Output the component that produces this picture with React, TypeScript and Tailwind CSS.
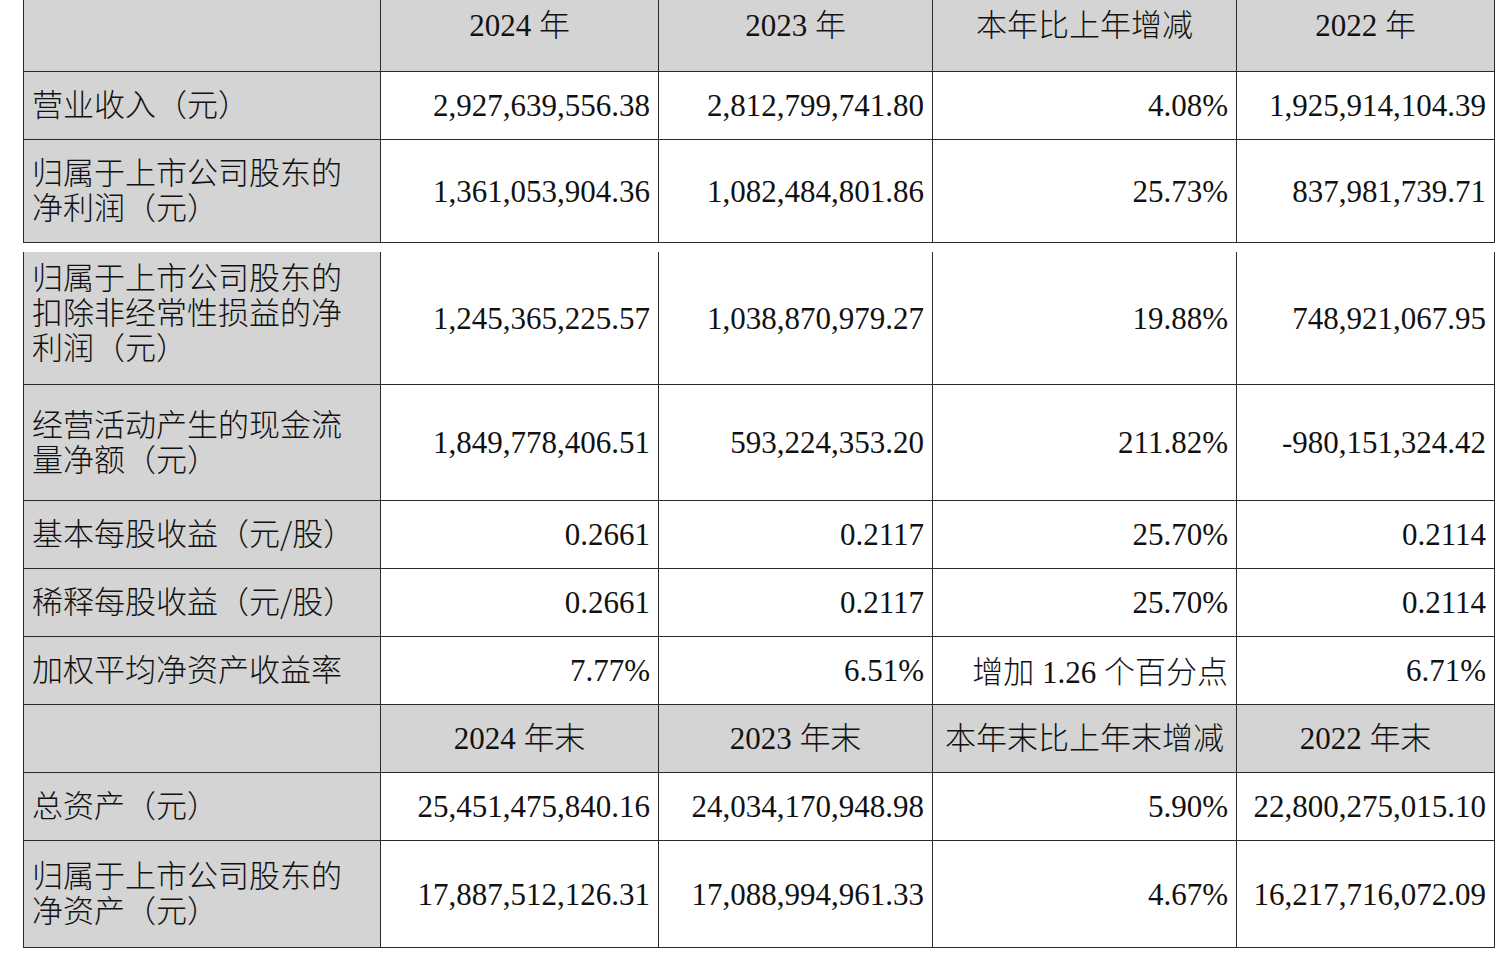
import React from "react";

const serif = '"Liberation Serif", serif';
const cjk = '"Noto Sans CJK SC", sans-serif';

type Row = {
  label: string[];
  values: string[];
  h: string;
  head?: boolean;
  labelPad?: string;
};

const cols = "grid grid-cols-[357px_278px_274px_304px_259px]";

const top: Row[] = [
  { label: [""], values: ["2024 年", "2023 年", "本年比上年增减", "2022 年"], h: "h-[72px]", head: true },
  { label: ["营业收入（元）"], values: ["2,927,639,556.38", "2,812,799,741.80", "4.08%", "1,925,914,104.39"], h: "h-[68px]" },
  {
    label: ["归属于上市公司股东的", "净利润（元）"],
    values: ["1,361,053,904.36", "1,082,484,801.86", "25.73%", "837,981,739.71"],
    h: "h-[103px]",
  },
];

const bottom: Row[] = [
  {
    label: ["归属于上市公司股东的", "扣除非经常性损益的净", "利润（元）"],
    values: ["1,245,365,225.57", "1,038,870,979.27", "19.88%", "748,921,067.95"],
    h: "h-[133px]",
    labelPad: "pb-[15px]",
  },
  {
    label: ["经营活动产生的现金流", "量净额（元）"],
    values: ["1,849,778,406.51", "593,224,353.20", "211.82%", "-980,151,324.42"],
    h: "h-[116px]",
  },
  { label: ["基本每股收益（元/股）"], values: ["0.2661", "0.2117", "25.70%", "0.2114"], h: "h-[68px]" },
  { label: ["稀释每股收益（元/股）"], values: ["0.2661", "0.2117", "25.70%", "0.2114"], h: "h-[68px]" },
  { label: ["加权平均净资产收益率"], values: ["7.77%", "6.51%", "增加 1.26 个百分点", "6.71%"], h: "h-[68px]" },
  { label: [""], values: ["2024 年末", "2023 年末", "本年末比上年末增减", "2022 年末"], h: "h-[68px]", head: true },
  {
    label: ["总资产（元）"],
    values: ["25,451,475,840.16", "24,034,170,948.98", "5.90%", "22,800,275,015.10"],
    h: "h-[68px]",
  },
  {
    label: ["归属于上市公司股东的", "净资产（元）"],
    values: ["17,887,512,126.31", "17,088,994,961.33", "4.67%", "16,217,716,072.09"],
    h: "h-[107px]",
  },
];

// latin runs in the serif face, CJK runs in the CJK face
function Mixed({ text }: { text: string }) {
  const parts = text.split(/([\u3000-\u9fff\uff00-\uffef]+)/).filter(Boolean);
  return (
    <>
      {parts.map((p, i) =>
        /[\u3000-\u9fff\uff00-\uffef]/.test(p) ? (
          <span key={i} className="font-light" style={{ fontFamily: cjk }}>
            {p}
          </span>
        ) : (
          <span key={i} style={{ fontFamily: serif }}>
            {p.replace(/ /g, "\u00a0")}
          </span>
        )
      )}
    </>
  );
}

function TableRow({ row, first }: { row: Row; first?: boolean }) {
  const align = first && row.head ? "items-start pt-[5px]" : row.head ? "items-center pb-[4px]" : "items-center";
  return (
    <div className={`${cols} ${row.h}`}>
      <div className={`flex ${align} bg-[#d4d4d4] border-l border-b border-[#2a2a2a] pl-[8px] pr-[10px]`}>
        <div className={`font-light ${row.labelPad ?? "pb-[6px]"}`} style={{ fontFamily: cjk }}>
          {row.label.map((l, i) => (
            <div key={i} className="h-[35px] leading-[35px] whitespace-nowrap">
              {l}
            </div>
          ))}
        </div>
      </div>
      {row.values.map((v, i) => (
        <div
          key={i}
          className={`flex ${align} border-l border-b border-[#2a2a2a] leading-[35px] whitespace-nowrap ${
            row.head ? "justify-center bg-[#d4d4d4]" : "justify-end pr-[8px]"
          } ${i === 3 ? "border-r" : ""}`}
        >
          <span>
            <Mixed text={v} />
          </span>
        </div>
      ))}
    </div>
  );
}

export default function App() {
  return (
    <div className="bg-white w-[1503px] h-[957px] pl-[23px] text-[31px] text-[#111]" style={{ fontFamily: serif }}>
      <div className="flex flex-col">
        {top.map((r, i) => (
          <TableRow key={i} row={r} first />
        ))}
      </div>
      <div className="h-[9px]" />
      <div className="flex flex-col">
        {bottom.map((r, i) => (
          <TableRow key={i} row={r} />
        ))}
      </div>
    </div>
  );
}
